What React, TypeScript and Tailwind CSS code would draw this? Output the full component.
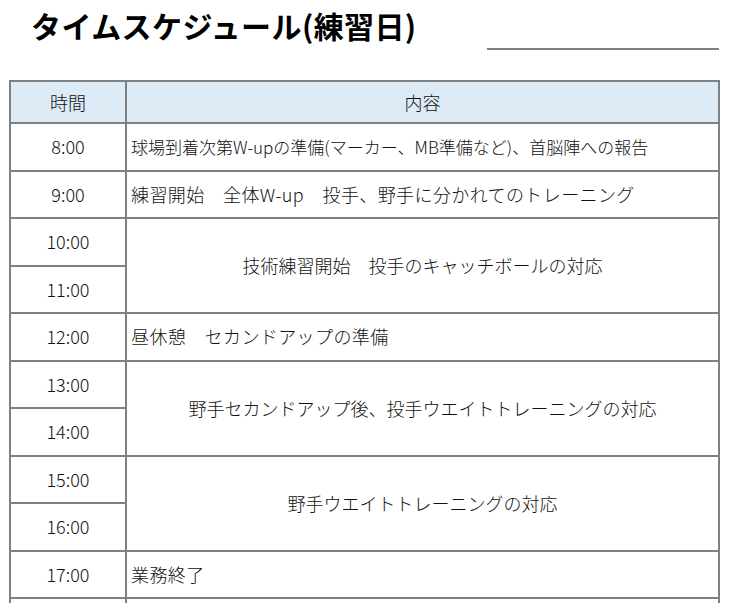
import React from 'react';

type Row = {
  time: string;
  text?: string;
  span?: boolean; // merged cell starting at this row (covers 2 rows)
  skip?: boolean; // covered by the merged cell above
  small?: boolean; // shrink-to-fit line
};

const rows: Row[] = [
  { time: '8:00', text: '球場到着次第W-upの準備(マーカー、MB準備など)、首脳陣への報告', small: true },
  { time: '9:00', text: '練習開始　全体W-up　投手、野手に分かれてのトレーニング' },
  { time: '10:00', text: '技術練習開始　投手のキャッチボールの対応', span: true },
  { time: '11:00', skip: true },
  { time: '12:00', text: '昼休憩　セカンドアップの準備' },
  { time: '13:00', text: '野手セカンドアップ後、投手ウエイトトレーニングの対応', span: true },
  { time: '14:00', skip: true },
  { time: '15:00', text: '野手ウエイトトレーニングの対応', span: true },
  { time: '16:00', skip: true },
  { time: '17:00', text: '業務終了' },
  { time: '', text: '' },
];

const App = () => {
  return (
    <div
      className="w-[735px] h-[603px] overflow-hidden bg-white text-[#111]"
      style={{ fontFamily: '"Noto Sans CJK JP", "Noto Sans", sans-serif' }}
    >
      {/* Title */}
      <div className="flex items-start h-[80px]">
        <h1 className="ml-[31px] mt-[5px] text-[30px] leading-[40px] font-bold text-black tracking-[0.4px]">
          タイムスケジュール(練習日)
        </h1>
        <div className="ml-auto mr-[16px] mt-[48px] w-[232px] h-[2px] bg-[#808080]" />
      </div>

      {/* Schedule table */}
      <div className="ml-[9px] w-[711px] grid grid-cols-[114px_1fr] grid-rows-[40px_repeat(11,45.5px)] gap-[2px] p-[2px] bg-[#808080] text-[18px] font-light">
        <div className="bg-[#ddebf7] flex items-center justify-center">時間</div>
        <div className="bg-[#ddebf7] flex items-center justify-center">内容</div>

        {rows.map((r, i) => (
          <React.Fragment key={i}>
            <div className="bg-white flex items-center justify-center">{r.time}</div>
            {r.skip ? null : r.span ? (
              <div className="bg-white row-span-2 flex items-center justify-center">{r.text}</div>
            ) : (
              <div
                className={`bg-white flex items-center pl-[4px] whitespace-nowrap ${
                  r.small ? 'text-[17px]' : 'tracking-[0.4px]'
                }`}
              >
                {r.text}
              </div>
            )}
          </React.Fragment>
        ))}
      </div>
    </div>
  );
};

export default App;
